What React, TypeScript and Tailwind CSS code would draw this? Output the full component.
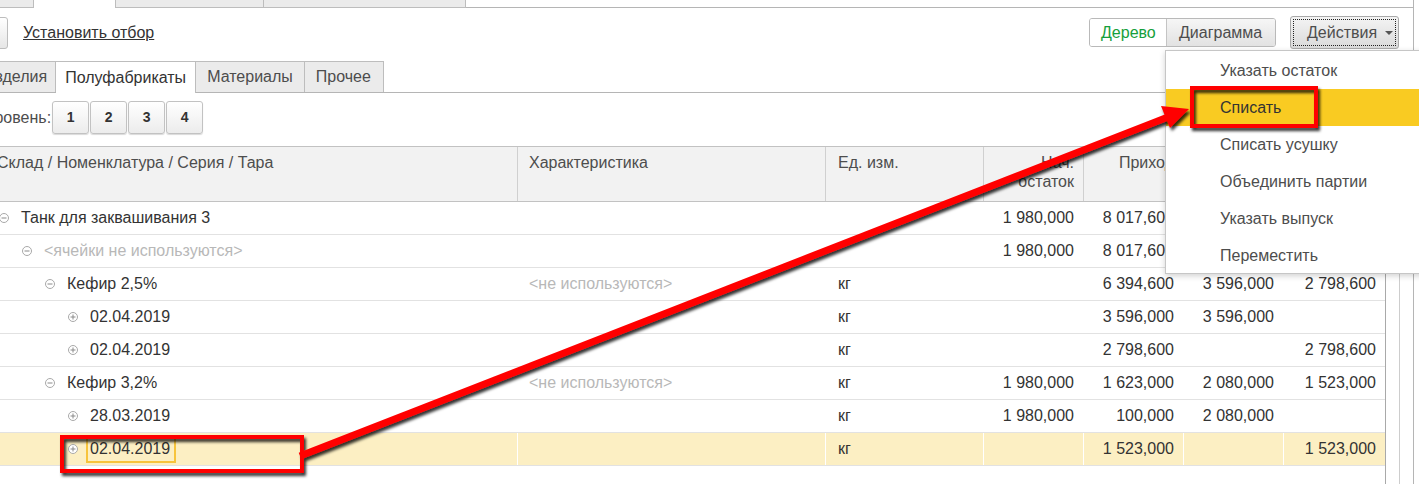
import React from "react";

type Row = {
  level: number;
  open: boolean;
  name: string;
  muted?: boolean;
  char?: string;
  unit?: string;
  vals: string[];
  selected?: boolean;
};

const rows: Row[] = [
  { level: 0, open: true, name: "Танк для заквашивания 3", vals: ["1 980,000", "8 017,600", "5 676,000", "4 321,600"] },
  { level: 1, open: true, name: "<ячейки не используются>", muted: true, vals: ["1 980,000", "8 017,600", "5 676,000", "4 321,600"] },
  { level: 2, open: true, name: "Кефир 2,5%", char: "<не используются>", unit: "кг", vals: ["", "6 394,600", "3 596,000", "2 798,600"] },
  { level: 3, open: false, name: "02.04.2019", unit: "кг", vals: ["", "3 596,000", "3 596,000", ""] },
  { level: 3, open: false, name: "02.04.2019", unit: "кг", vals: ["", "2 798,600", "", "2 798,600"] },
  { level: 2, open: true, name: "Кефир 3,2%", char: "<не используются>", unit: "кг", vals: ["1 980,000", "1 623,000", "2 080,000", "1 523,000"] },
  { level: 3, open: false, name: "28.03.2019", unit: "кг", vals: ["1 980,000", "100,000", "2 080,000", ""] },
  { level: 3, open: false, name: "02.04.2019", unit: "кг", vals: ["", "1 523,000", "", "1 523,000"], selected: true },
];

const menu = ["Указать остаток", "Списать", "Списать усушку", "Объединить партии", "Указать выпуск", "Переместить"];

const indent = ["ml-[-1px]", "ml-[22px]", "ml-[45px]", "ml-[68px]"];

function TreeIcon({ open }: { open: boolean }) {
  return (
    <svg width="10" height="10" viewBox="0 0 10 10" className="shrink-0">
      <circle cx="5" cy="5" r="4.5" fill="white" stroke="#a8a8a8" strokeWidth="1" />
      <line x1="2.5" y1="5" x2="7.5" y2="5" stroke="#8a8a8a" strokeWidth="1" />
      {!open && <line x1="5" y1="2.5" x2="5" y2="7.5" stroke="#8a8a8a" strokeWidth="1" />}
    </svg>
  );
}

export default function App() {
  return (
    <div className="relative w-[1419px] h-[484px] overflow-hidden bg-white text-[16px] text-[#333] font-['Liberation_Sans',Arial,sans-serif]">
      {/* form tabs at the very top */}
      <div className="flex h-[8px] w-[1414px]">
        <div className="w-[34px] bg-[#ebebeb] border-r border-b border-[#bdbdbd]" />
        <div className="w-[81px] bg-white" />
        <div className="w-[149px] bg-[#ebebeb] border-x border-b border-[#bdbdbd]" />
        <div className="w-[202px] bg-[#ebebeb] border-r border-b border-[#bdbdbd]" />
        <div className="flex-1 border-b border-r border-[#b5b5b5]" />
      </div>

      <div className="w-[1414px] h-[476px] border-r border-[#b5b5b5] flex flex-col">
        {/* toolbar */}
        <div className="mt-[8px] h-[33px] flex items-center pr-[14px]">
          <div className="-ml-[22px] w-[30px] h-[32px] border border-[#bdbdbd] rounded-[3px] bg-gradient-to-b from-white to-[#e6e6e6]" />
          <a className="ml-[15px] underline text-[#333] leading-none">Установить отбор</a>
          <div className="flex-1" />
          <div className="flex h-[29px] border border-[#b9b9b9] rounded-[3px] overflow-hidden">
            <div className="w-[76px] flex items-center pl-[11px] bg-white text-[#16a03c]">Дерево</div>
            <div className="w-[109px] flex items-center pl-[12px] border-l border-[#c4c4c4] bg-gradient-to-b from-[#f6f6f6] to-[#e2e2e2] text-[#4d4d4d]">Диаграмма</div>
          </div>
          <div className="ml-[14px] w-[109px] h-[33px] p-[2px] border border-[#a9a9a9] rounded-[3px] bg-gradient-to-b from-[#f4f4f4] to-[#dadada]">
            <div className="h-full border border-dotted border-[#222] flex items-center pl-[13px] text-[#4d4d4d]">
              Действия
              <span className="ml-[8px] w-0 h-0 border-l-[4px] border-r-[4px] border-t-[4px] border-l-transparent border-r-transparent border-t-[#555]" />
            </div>
          </div>
        </div>

        {/* tabs */}
        <div className="mt-[12px] h-[32px] flex items-end border-b border-[#b5b5b5]">
          <div className="-ml-[28px] h-[31px] pl-[11px] pr-[8px] flex items-center bg-[#ebebeb] border border-b-0 border-[#bdbdbd] text-[#4d4d4d]">Изделия</div>
          <div className="h-[32px] -mb-px px-[9px] flex items-center bg-white border border-l-0 border-b-0 border-[#bdbdbd] text-[#333]">Полуфабрикаты</div>
          <div className="h-[31px] px-[11px] flex items-center bg-[#ebebeb] border border-l-0 border-b-0 border-[#bdbdbd] text-[#4d4d4d]">Материалы</div>
          <div className="h-[31px] pl-[11px] pr-[12px] flex items-center bg-[#ebebeb] border border-l-0 border-b-0 border-[#bdbdbd] text-[#4d4d4d]">Прочее</div>
        </div>

        {/* level buttons */}
        <div className="mt-[8px] h-[33px] flex items-center">
          <span className="-ml-[15px] mr-[1px] text-[#4d4d4d]">Уровень:</span>
          <div className="flex">
            {["1", "2", "3", "4"].map((n) => (
              <div
                key={n}
                className="w-[37px] h-[33px] mr-[1px] flex items-center justify-center border border-[#c2c2c2] rounded-[3px] bg-gradient-to-b from-white to-[#ececec] shadow-[0_1px_1px_rgba(0,0,0,0.15)] text-[14px] font-bold text-[#333]"
              >
                {n}
              </div>
            ))}
          </div>
        </div>

        {/* table */}
        <div className="mt-[12px] flex-1 flex">
          <div className="w-[1386px] border-r border-[#a9a9a9]">
            <div className="flex h-[56px] border-y border-[#c2c2c2] bg-[#f2f2f2] text-[#4d4d4d] leading-[19px]">
              <div className="w-[518px] border-r border-[#d0d0d0] pt-[6px]"><div className="-ml-[3px]">Склад / Номенклатура / Серия / Тара</div></div>
              <div className="w-[308px] border-r border-[#d0d0d0] pt-[6px] pl-[11px]">Характеристика</div>
              <div className="w-[158px] border-r border-[#d0d0d0] pt-[6px] pl-[12px]">Ед. изм.</div>
              <div className="w-[100px] border-r border-[#d0d0d0] pt-[6px] pr-[9px] text-right">Нач.<br />остаток</div>
              <div className="w-[100px] border-r border-[#d0d0d0] pt-[6px] pr-[9px] text-right">Приход</div>
              <div className="w-[100px] border-r border-[#d0d0d0] pt-[6px] pr-[9px] text-right">Расход</div>
              <div className="w-[101px] pt-[6px] pr-[9px] text-right">Кон.<br />остаток</div>
            </div>
            {rows.map((r, i) => {
              const bg = r.selected ? "bg-[#fcefc3]" : "bg-white";
              return (
                <div key={i} className="flex h-[33px] border-b border-[#e2e2e2] text-[#333]">
                  <div className={`w-[518px] border-r border-white flex items-center ${bg}`}>
                    <div className={`flex items-center ${indent[r.level]}`}>
                      <TreeIcon open={r.open} />
                      {r.selected ? (
                        <div className="ml-[8px] h-[27px] pl-[2px] pr-[4px] flex items-center border-2 border-[#f7c43c]">{r.name}</div>
                      ) : (
                        <span className={`ml-[12px] ${r.muted ? "text-[#b8b8b8]" : ""}`}>{r.name}</span>
                      )}
                    </div>
                  </div>
                  <div className={`w-[308px] border-r border-white flex items-center pl-[11px] text-[#b8b8b8] ${bg}`}>{r.char}</div>
                  <div className={`w-[158px] border-r border-white flex items-center pl-[12px] ${bg}`}>{r.unit}</div>
                  {r.vals.map((v, j) => (
                    <div
                      key={j}
                      className={`${j === 3 ? "w-[101px]" : "w-[100px] border-r border-white"} flex items-center justify-end pr-[9px] ${bg}`}
                    >
                      {v}
                    </div>
                  ))}
                </div>
              );
            })}
          </div>
          <div className="w-[14px] border-r border-[#cdcdcd]" />
        </div>
      </div>

      {/* actions dropdown */}
      <div className="absolute left-[1165px] top-[50px] w-[260px] h-[224px] pt-px border border-[#c6c6c6] bg-white shadow-[0_2px_6px_rgba(0,0,0,0.18)]">
        {menu.map((m, i) => (
          <div
            key={m}
            className={`h-[37px] flex items-center pl-[54px] ${i === 1 ? "bg-[#f9cb22] text-[#333]" : "text-[#4d4d4d]"}`}
          >
            {m}
          </div>
        ))}
      </div>

      {/* red annotation */}
      <svg className="absolute left-0 top-0 pointer-events-none" width="1419" height="484">
        <defs>
          <filter id="sh" x="-5%" y="-10%" width="110%" height="130%">
            <feDropShadow dx="2" dy="3" stdDeviation="1.6" floodColor="#000" floodOpacity="0.8" />
          </filter>
        </defs>
        <g filter="url(#sh)">
          <rect x="62" y="437" width="240" height="34" fill="none" stroke="#ff0000" strokeWidth="4" />
          <rect x="1192" y="88" width="124" height="38" fill="none" stroke="#ff0000" strokeWidth="4" />
          <line x1="300" y1="456" x2="1168" y2="117" stroke="#ff0000" strokeWidth="7" />
          <polygon points="1189,109 1170,128 1161,106" fill="#ff0000" />
        </g>
      </svg>
    </div>
  );
}
